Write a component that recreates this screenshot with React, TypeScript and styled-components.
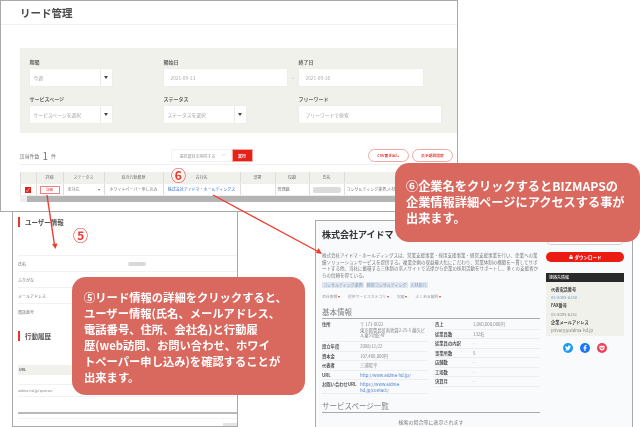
import React from "react";
import styled, { createGlobalStyle } from "styled-components";
import { FaTwitter, FaFacebookF, FaGetPocket, FaLock } from "react-icons/fa";

const GlobalStyle = createGlobalStyle`
  html, body {
    margin: 0;
    padding: 0;
    background: #ffffff;
  }
  body {
    font-family: "Noto Sans CJK JP", "Noto Sans", sans-serif;
    color: #333333;
  }
  * {
    box-sizing: border-box;
  }
`;

const Canvas = styled.div`
  position: relative;
  width: 640px;
  height: 427px;
  overflow: hidden;
  background: #ffffff;
  filter: blur(0.55px);
`;

const Frame = styled.section<{ $x: number; $y: number; $w: number; $h: number; $bg?: string }>`
  position: absolute;
  left: ${(p) => p.$x}px;
  top: ${(p) => p.$y}px;
  width: ${(p) => p.$w}px;
  height: ${(p) => p.$h}px;
  background: ${(p) => p.$bg || "#ffffff"};
  border: 1.5px solid #a9a9a9;
  overflow: hidden;
`;

/* top window */
const PageHeader = styled.header`
  height: 24px;
  padding: 2px 0 0 19px;
  border-bottom: 1px solid #f0f0f0;
  font-size: 10.5px;
  font-weight: 700;
  line-height: 20px;
  color: #4a4a4a;
`;

const FilterPanel = styled.div`
  margin: 23px 0 0 18.5px;
  height: 85px;
  padding: 9px 0 0 10px;
  background: #f1f1ec;
  display: grid;
  grid-template-columns: 134px 135px 1fr;
  grid-auto-rows: 29px;
  row-gap: 8px;
`;

const Field = styled.div`
  display: flex;
  flex-direction: column;
`;

const FieldLabel = styled.label`
  height: 12px;
  font-size: 5px;
  font-weight: 700;
  line-height: 10px;
  color: #666666;
`;

const FieldBody = styled.div`
  display: flex;
  align-items: center;
  height: 17px;
`;

const TextBox = styled.div<{ $w: number }>`
  width: ${(p) => p.$w}px;
  height: 17px;
  padding-left: 4px;
  background: #ffffff;
  font-size: 4.8px;
  line-height: 17px;
  color: #a8a8a8;
  box-shadow: 0 0 1px #d8d8d8;
`;

const DateBox = styled(TextBox)`
  padding-left: 7px;
`;

const DropToggle = styled.div`
  width: 11px;
  height: 17px;
  margin-left: 1px;
  background: #ffffff;
  box-shadow: 0 0 1px #d8d8d8;
  display: flex;
  align-items: center;
  justify-content: center;

  &::after {
    content: "";
    border-left: 2px solid transparent;
    border-right: 2px solid transparent;
    border-top: 3px solid #444444;
  }
`;

const Tilde = styled.span`
  width: 12px;
  text-align: center;
  font-size: 5px;
  color: #aaaaaa;
`;

const ResultBar = styled.div`
  margin: 16px 0 0 18.5px;
  height: 16px;
  padding-bottom: 2px;
  border-bottom: 1px solid #f0f0f0;
  display: flex;
  align-items: center;
  font-size: 5px;
  color: #777777;
`;

const ResultCount = styled.div`
  width: 151px;
  display: flex;
  align-items: center;
  gap: 3px;

  b {
    font-size: 10px;
    font-weight: 400;
    line-height: 12px;
  }
`;

const BulkSelect = styled.div`
  width: 61px;
  height: 13px;
  padding: 0 5px 0 8px;
  border: 1px solid #f2f2f2;
  display: flex;
  align-items: center;
  justify-content: space-between;
  font-size: 4px;
  color: #999999;
`;

const RunButton = styled.button`
  width: 21px;
  height: 13px;
  margin: 0 auto 0 0;
  padding: 0;
  border: 1px solid #f7a9a5;
  background: #e8201a;
  color: #ffffff;
  font: 700 4px "Noto Sans CJK JP", sans-serif;
`;

const OutlineButton = styled.button`
  width: 41px;
  height: 13px;
  margin-left: 3px;
  padding: 0;
  border: 1px solid #f0a8a4;
  border-radius: 7px;
  background: #ffffff;
  color: #e8403a;
  font: 700 3.8px "Noto Sans CJK JP", sans-serif;
`;

const ResultActionsEnd = styled.div`
  width: 4px;
`;

const LeadRow = styled.div<{ $head?: boolean }>`
  margin: ${(p) => (p.$head ? "7px" : "0")} 0 0 18.5px;
  height: 12px;
  display: grid;
  grid-template-columns: 16px 27px 41px 59px 77px 35px 34px 35px 1fr;
  background: ${(p) => (p.$head ? "#f1f1ec" : "#ffffff")};
  border-bottom: 1px solid #eeeeee;
  font-size: 4px;
  line-height: 11px;
  color: #777777;
`;

const LeadCell = styled.div<{ $center?: boolean }>`
  border-left: 1px solid #dddddd;
  padding: 0 2px;
  white-space: nowrap;
  overflow: hidden;
  display: flex;
  align-items: center;
  justify-content: ${(p) => (p.$center ? "center" : "flex-start")};
`;

const CompanyLink = styled.span`
  color: #2f6fd0;
`;

const CheckMark = styled.div`
  width: 6px;
  height: 6px;
  background: #e8201a;
  color: #ffffff;
  font-size: 5px;
  line-height: 6px;
  text-align: center;
`;

const DetailButton = styled.div`
  width: 20px;
  height: 8px;
  border: 1px solid #f0807a;
  color: #e8403a;
  font-size: 3.5px;
  line-height: 6px;
  text-align: center;
`;

const MaskedName = styled.div`
  width: 28px;
  height: 6px;
  background: #dcdcdc;
  border-radius: 2px;
`;

const StatusCell = styled.div`
  width: 100%;
  display: flex;
  justify-content: space-between;
  padding: 0 2px;
`;

const ScrollTrack = styled.div`
  margin-left: 18.5px;
  height: 6px;
  padding-left: 7px;
  background: #eeeeee;
`;

const ScrollThumb = styled.div`
  height: 6px;
  background: #b4b4b4;
`;

/* user info window */
const UserBody = styled.div`
  padding: 11px 0 0 5px;
`;

const SectionHeading = styled.h2`
  margin: 0;
  height: 10px;
  padding-left: 5px;
  border-left: 2px solid #e8352e;
  font-size: 6.5px;
  font-weight: 700;
  line-height: 10px;
  color: #555555;
`;

const InfoList = styled.div`
  margin-top: 28px;
  margin-bottom: 12px;
`;

const InfoRow = styled.div`
  height: 16px;
  border-top: 1px solid #f2f2f2;
  display: grid;
  grid-template-columns: 110px 1fr;
  align-items: center;
  font-size: 4px;
  color: #777777;
`;

const MaskedValue = styled.div`
  width: 18px;
  height: 4px;
  background: #d9d9d9;
  border-radius: 2px;
`;

const HistoryHead = styled.div`
  margin-top: 24px;
  height: 10px;
  padding-left: 1px;
  background: #f1f1ec;
  font-size: 3.5px;
  font-weight: 700;
  line-height: 10px;
  color: #666666;
`;

const HistoryRow = styled.div`
  margin-top: 9px;
  height: 13px;
  border-top: 1px solid #f2f2f2;
  border-bottom: 1px solid #f2f2f2;
  font-size: 3.5px;
  line-height: 11px;
  color: #888888;
`;

const DenseLine = styled.div`
  margin-top: 15px;
  height: 2px;
  background: #b9b9b9;
`;

const HistoryFoot = styled.div`
  margin-top: 4px;
  border-top: 1px solid #f2f2f2;
  padding-top: 4px;
  display: flex;
  justify-content: flex-end;
`;

const PagerStub = styled.div`
  width: 14px;
  height: 4px;
  background: #e4e4e4;
`;

/* company window */
const CompanyLayout = styled.div`
  display: grid;
  grid-template-columns: 218px 78px;
  column-gap: 6px;
  padding: 8px 0 0 6px;
`;

const CompanyTitle = styled.h1`
  margin: 0;
  font-size: 9px;
  font-weight: 700;
  line-height: 12px;
  color: #333333;
  white-space: nowrap;
`;

const Intro = styled.p`
  margin: 11px 0 0;
  font-size: 4.5px;
  line-height: 6.5px;
  color: #777777;
`;

const TagRow = styled.div`
  margin-top: 4px;
  display: flex;
  gap: 2px;
`;

const Tag = styled.span`
  height: 6px;
  padding: 0 1px;
  background: #dfe6f0;
  color: #7f97bb;
  font-size: 4px;
  line-height: 6px;
`;

const AnchorRow = styled.div`
  margin-top: 6px;
  display: flex;
  gap: 8px;
  font-size: 3.8px;
  line-height: 6px;
  color: #999999;

  span::after {
    content: " ▾";
    color: #e8352e;
  }
`;

const BlockHeading = styled.h2`
  margin: 6px 0 0;
  height: 13px;
  border-bottom: 1px solid #aaaaaa;
  font-size: 7.5px;
  font-weight: 400;
  line-height: 11px;
  color: #808080;
`;

const SpecGrid = styled.div`
  margin-top: 1px;
  display: grid;
  grid-template-columns: 106px 105px;
  column-gap: 7px;
`;

const SpecRow = styled.div<{ $h: number }>`
  min-height: ${(p) => p.$h}px;
  padding-top: 2px;
  border-bottom: 1px solid #eeeeee;
  display: grid;
  grid-template-columns: 38px 1fr;
  font-size: 4.3px;
  line-height: 5.5px;
  color: #888888;

  b {
    font-weight: 700;
    color: #555555;
  }
`;

const SpecLink = styled.span`
  color: #4d80cf;
`;

const ServiceSection = styled.div`
  margin-top: 1px;
`;

const ServiceNote = styled.div`
  margin-top: 5px;
  text-align: center;
  font-size: 5px;
  line-height: 7px;
  color: #777777;
`;

const Side = styled.aside`
  display: flex;
  flex-direction: column;
`;

const GhostPill = styled.div`
  height: 10px;
  margin-top: 6px;
  border: 1px solid #d0d0d0;
  border-radius: 6px;
  background: #ffffff;
`;

const DownloadPill = styled.div`
  height: 10px;
  margin-top: 7px;
  border-radius: 6px;
  background: #ec1c12;
  color: #ffffff;
  font-size: 4.5px;
  font-weight: 700;
  display: flex;
  align-items: center;
  justify-content: center;
  gap: 2px;
`;

const ContactTitle = styled.div`
  height: 9px;
  margin-top: 11px;
  padding-left: 3px;
  background: #2a2a2a;
  color: #ffffff;
  font-size: 4px;
  line-height: 9px;
`;

const ContactPanel = styled.div`
  height: 54px;
  padding: 3px 5px;
  background: #f1f1ec;
  font-size: 4.2px;
  line-height: 8.2px;
  color: #888888;

  b {
    display: block;
    color: #444444;
  }
`;

const ContactLink = styled.div<{ $blue?: boolean }>`
  color: ${(p) => (p.$blue ? "#6f9ad8" : "#888888")};
`;

const SocialRow = styled.div`
  margin-top: 7px;
  display: flex;
  justify-content: center;
  gap: 7px;
`;

const SocialIcon = styled.span<{ $bg: string }>`
  width: 10px;
  height: 10px;
  border-radius: 50%;
  background: ${(p) => p.$bg};
  color: #ffffff;
  font-size: 6px;
  display: flex;
  align-items: center;
  justify-content: center;
`;

/* overlays */
const ArrowLayer = styled.svg`
  position: absolute;
  left: 0;
  top: 0;
  pointer-events: none;
`;

const StepMark = styled.span<{ $x: number; $y: number }>`
  position: absolute;
  left: ${(p) => p.$x}px;
  top: ${(p) => p.$y}px;
  font-size: 15px;
  font-weight: 700;
  line-height: 18px;
  color: #ee3a32;
  text-shadow: 0 0 2px #ffffff, 0 0 2px #ffffff;
`;

const Callout = styled.div<{ $x: number; $y: number; $w: number; $h: number; $size: number; $pad: string }>`
  position: absolute;
  left: ${(p) => p.$x}px;
  top: ${(p) => p.$y}px;
  width: ${(p) => p.$w}px;
  height: ${(p) => p.$h}px;
  padding: ${(p) => p.$pad};
  border-radius: 14px;
  background: #d9685f;
  color: #ffffff;
  font-size: ${(p) => p.$size}px;
  font-weight: 700;
  line-height: 15.9px;
  white-space: nowrap;
`;

const CalloutLine = styled.div``;

const leadColumns = ["", "詳細", "ステータス", "直近行動履歴", "会社名", "部署", "役職", "氏名", "業種"];

const userRows = ["氏名", "ふりがな", "メールアドレス", "電話番号"];

const leftSpecs: [string, React.ReactNode, number][] = [
  ["住所", <>〒 171-0022<br />東京都豊島区南池袋2-25-5 藤久ビル東5号館 4F</>, 22],
  ["設立年度", "2008/12/22", 9.5],
  ["資本金", "107,400,000円", 9.5],
  ["代表者", "三浦陽平", 9.5],
  ["URL", <SpecLink>http://www.aidma-hd.jp/</SpecLink>, 9.5],
  ["お問い合わせURL", <SpecLink>https://www.aidma-hd.jp/contact/</SpecLink>, 13],
];

const rightSpecs: [string, string, number][] = [
  ["売上", "1,060,000,000円", 9.5],
  ["従業員数", "132名", 9.5],
  ["従業員の内訳", "-", 9.5],
  ["事業所数", "5", 9.5],
  ["店舗数", "-", 9.5],
  ["工場数", "-", 9.5],
  ["決算月", "-", 9.5],
];

const App: React.FC = () => {
  return (
    <Canvas>
      <GlobalStyle />

      <Frame $x={12} $y={205} $w={226} $h={222}>
        <UserBody>
          <SectionHeading>ユーザー情報</SectionHeading>
          <InfoList>
            {userRows.map((label, index) => (
              <InfoRow key={label}>
                <span>{label}</span>
                {index === 0 && <MaskedValue />}
              </InfoRow>
            ))}
          </InfoList>
          <SectionHeading>行動履歴</SectionHeading>
          <HistoryHead>URL</HistoryHead>
          <HistoryRow>aidma-hd.jp/sponsor</HistoryRow>
          <DenseLine />
          <HistoryFoot>
            <PagerStub />
          </HistoryFoot>
        </UserBody>
      </Frame>

      <Frame $x={315} $y={220} $w={318} $h={208} $bg="#f9fafc">
        <CompanyLayout>
          <div>
            <CompanyTitle>株式会社アイドマ・ホールディングス</CompanyTitle>
            <Intro>
              株式会社アイドマ・ホールディングスは、営業支援事業・採用支援事業・経営支援事業を行い、企業への業績ソリューションサービスを提供する。複業企画の収益最大化にこだわり、営業体制の構築を一貫してサポートする他、当社に蓄積する三体制の求人サイトで法律から企業の採用活動をサポートし、多くの支援者からの信頼を得ている。
            </Intro>
            <TagRow>
              <Tag>コンサルティング業界</Tag>
              <Tag>経営コンサルティング</Tag>
              <Tag>人材紹介</Tag>
            </TagRow>
            <AnchorRow>
              <span>会社情報</span>
              <span>提供サービスカテゴリ</span>
              <span>実績</span>
              <span>よくある質問</span>
            </AnchorRow>
            <BlockHeading>基本情報</BlockHeading>
            <SpecGrid>
              <div>
                {leftSpecs.map(([label, value, height]) => (
                  <SpecRow key={label} $h={height}>
                    <b>{label}</b>
                    <span>{value}</span>
                  </SpecRow>
                ))}
              </div>
              <div>
                {rightSpecs.map(([label, value, height]) => (
                  <SpecRow key={label} $h={height}>
                    <b>{label}</b>
                    <span>{value}</span>
                  </SpecRow>
                ))}
              </div>
            </SpecGrid>
            <ServiceSection>
              <BlockHeading>サービスページ一覧</BlockHeading>
              <ServiceNote>検索の場合等に表示されます</ServiceNote>
            </ServiceSection>
          </div>
          <Side>
            <GhostPill />
            <DownloadPill>
              <FaLock size={4} />
              ダウンロード
            </DownloadPill>
            <ContactTitle>連絡先情報</ContactTitle>
            <ContactPanel>
              <b>代表電話番号</b>
              <ContactLink $blue>03-5005-6250</ContactLink>
              <b>FAX番号</b>
              <ContactLink>03-5005-6251</ContactLink>
              <b>企業メールアドレス</b>
              <ContactLink>privacy@aidma-hd.jp</ContactLink>
            </ContactPanel>
            <SocialRow>
              <SocialIcon $bg="#1d9bf0"><FaTwitter /></SocialIcon>
              <SocialIcon $bg="#1877f2"><FaFacebookF /></SocialIcon>
              <SocialIcon $bg="#ef3f56"><FaGetPocket /></SocialIcon>
            </SocialRow>
          </Side>
        </CompanyLayout>
      </Frame>

      <Frame $x={0} $y={0} $w={458} $h={212}>
        <PageHeader>リード管理</PageHeader>
        <FilterPanel>
          <Field>
            <FieldLabel>期間</FieldLabel>
            <FieldBody>
              <TextBox $w={70}>今週</TextBox>
              <DropToggle />
            </FieldBody>
          </Field>
          <Field>
            <FieldLabel>開始日</FieldLabel>
            <FieldBody>
              <DateBox $w={123}>2021-09-13</DateBox>
              <Tilde>~</Tilde>
            </FieldBody>
          </Field>
          <Field>
            <FieldLabel>終了日</FieldLabel>
            <FieldBody>
              <DateBox $w={124}>2021-09-16</DateBox>
            </FieldBody>
          </Field>
          <Field>
            <FieldLabel>サービスページ</FieldLabel>
            <FieldBody>
              <TextBox $w={70}>サービスページを選択</TextBox>
              <DropToggle />
            </FieldBody>
          </Field>
          <Field>
            <FieldLabel>ステータス</FieldLabel>
            <FieldBody>
              <TextBox $w={70}>ステータスを選択</TextBox>
              <DropToggle />
            </FieldBody>
          </Field>
          <Field>
            <FieldLabel>フリーワード</FieldLabel>
            <FieldBody>
              <DateBox $w={142}>フリーワードで検索</DateBox>
            </FieldBody>
          </Field>
        </FilterPanel>

        <ResultBar>
          <ResultCount>
            該当件数 <b>1</b> 件
          </ResultCount>
          <BulkSelect>
            <span>選択項目を削除する</span>
            <span>﹀</span>
          </BulkSelect>
          <RunButton>実行</RunButton>
          <OutlineButton>CSV書き出し</OutlineButton>
          <OutlineButton>表示項目設定</OutlineButton>
          <ResultActionsEnd />
        </ResultBar>

        <LeadRow $head>
          {leadColumns.map((label, index) => (
            <LeadCell key={index} $center>
              {label}
            </LeadCell>
          ))}
        </LeadRow>
        <LeadRow>
          <LeadCell $center>
            <CheckMark>✓</CheckMark>
          </LeadCell>
          <LeadCell $center>
            <DetailButton>詳細</DetailButton>
          </LeadCell>
          <LeadCell>
            <StatusCell>
              <span>未対応</span>
              <span>▾</span>
            </StatusCell>
          </LeadCell>
          <LeadCell $center>ホワイトペーパー申し込み</LeadCell>
          <LeadCell $center>
            <CompanyLink>株式会社アイドマ・ホールディングス</CompanyLink>
          </LeadCell>
          <LeadCell />
          <LeadCell>管理職</LeadCell>
          <LeadCell $center>
            <MaskedName />
          </LeadCell>
          <LeadCell>コンサルティング業界,人材...</LeadCell>
        </LeadRow>
        <ScrollTrack>
          <ScrollThumb />
        </ScrollTrack>
      </Frame>

      <ArrowLayer width="640" height="427" viewBox="0 0 640 427">
        <line x1="47" y1="195" x2="54.5" y2="245" stroke="#ee3b30" strokeWidth="1.4" />
        <polygon points="52,244 57.5,243.5 55.5,249" fill="#ee3b30" />
        <line x1="213" y1="195" x2="317" y2="251" stroke="#ee3b30" strokeWidth="1.4" />
        <polygon points="318.5,248 316,253 322,254" fill="#ee3b30" />
      </ArrowLayer>

      <StepMark $x={171} $y={166}>⑥</StepMark>
      <StepMark $x={73} $y={226}>⑤</StepMark>

      <Callout $x={395} $y={163} $w={245} $h={79} $size={12.2} $pad="16px 0 0 11px">
        <CalloutLine>⑥企業名をクリックするとBIZMAPSの</CalloutLine>
        <CalloutLine>企業情報詳細ページにアクセスする事が</CalloutLine>
        <CalloutLine>出来ます。</CalloutLine>
      </Callout>

      <Callout $x={72} $y={277} $w={233} $h={118} $size={11.3} $pad="13px 0 0 12px">
        <CalloutLine>⑤リード情報の詳細をクリックすると、</CalloutLine>
        <CalloutLine>ユーザー情報(氏名、メールアドレス、</CalloutLine>
        <CalloutLine>電話番号、住所、会社名)と行動履</CalloutLine>
        <CalloutLine>歴(web訪問、お問い合わせ、ホワイ</CalloutLine>
        <CalloutLine>トペーパー申し込み)を確認することが</CalloutLine>
        <CalloutLine>出来ます。</CalloutLine>
      </Callout>
    </Canvas>
  );
};

export default App;
